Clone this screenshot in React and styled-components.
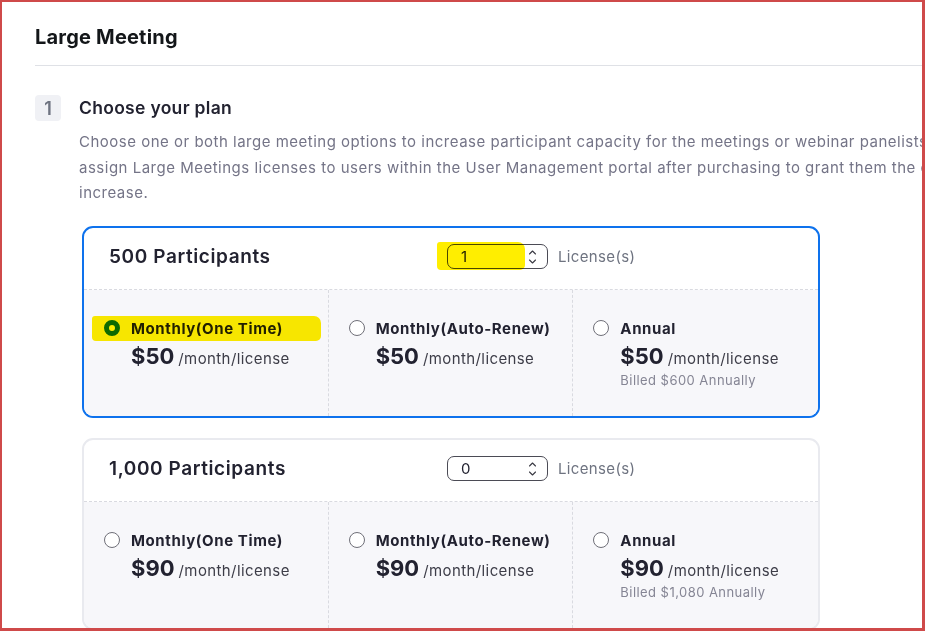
import React from "react";
import styled, { createGlobalStyle } from "styled-components";

const Global = createGlobalStyle`
  html, body { margin: 0; padding: 0; background: #fff; }
  body { font-family: Inter, "Noto Sans", "Liberation Sans", sans-serif; }
  * { box-sizing: border-box; }
`;

const Frame = styled.div`
  width: 925px;
  height: 631px;
  border-style: solid;
  border-color: #cf4a4a;
  border-width: 2px 3px 3px 2px;
  overflow: hidden;
  background: #fff;
  position: relative;
`;

const Page = styled.div`
  padding: 23px 0 0 33px;
  width: 1200px;
`;

const Header = styled.div`
  padding-bottom: 15px;
  border-bottom: 1px solid #dfe1e6;
`;

const Title = styled.h1`
  margin: 0;
  font-size: 20px;
  line-height: 25px;
  font-weight: 650;
  color: #131619;
  letter-spacing: 0.2px;
`;

const Step = styled.div`
  display: grid;
  grid-template-columns: 26px 1fr;
  column-gap: 18px;
  margin-top: 29px;
`;

const Badge = styled.div`
  width: 26px;
  height: 26px;
  border-radius: 4px;
  background: #f0f1f5;
  color: #6e7380;
  font-size: 18px;
  font-weight: 600;
  display: flex;
  align-items: center;
  justify-content: center;
`;

const StepTitle = styled.h2`
  margin: 0;
  font-size: 17.5px;
  font-weight: 600;
  line-height: 26px;
  color: #222230;
  letter-spacing: 0.3px;
`;

const Desc = styled.p`
  grid-column: 2;
  margin: 8px 0 0;
  font-size: 15px;
  line-height: 25.5px;
  color: #747487;
  letter-spacing: 0.5px;
  white-space: nowrap;
`;

const Cards = styled.div`
  grid-column: 2;
  display: flex;
  flex-direction: column;
  gap: 20px;
  margin: 20px 0 0 3px;
  width: 738px;
`;

const Card = styled.div`
  border: 2px solid ${(p) => (p.$active ? "#0e72ed" : "#e9eaef")};
  border-radius: 11px;
  overflow: hidden;
  background: #fff;
`;

const CardHead = styled.div`
  height: 62px;
  display: flex;
  align-items: center;
  padding-left: 25px;
  padding-bottom: 3px;
  border-bottom: 1px dashed #d9dae0;
`;

const CardTitle = styled.div`
  width: 338px;
  font-size: 19px;
  font-weight: 600;
  color: #222230;
  letter-spacing: 0.6px;
`;

const SpinWrap = styled.div`
  position: relative;
  display: flex;
  align-items: center;
`;

const Spin = styled.div`
  width: 101px;
  height: 25px;
  border: 1px solid #4b4b55;
  border-radius: 7px;
  display: flex;
  align-items: center;
  justify-content: space-between;
  padding: 0 10px 0 13px;
  font-size: 15px;
  color: #222230;
`;

const Lic = styled.span`
  margin-left: 10px;
  font-size: 15px;
  color: #6e7380;
  letter-spacing: 0.35px;
`;

const Marker = styled.div`
  position: absolute;
  background: #ffee00;
  mix-blend-mode: multiply;
  border-radius: 3px 7px 5px 4px;
  pointer-events: none;
`;

const Body = styled.div`
  display: grid;
  grid-template-columns: repeat(3, 1fr);
  background: #f7f7fa;
  height: 126px;
`;

const Col = styled.div`
  position: relative;
  padding: 28.5px 0 0 20px;
  border-right: ${(p) => (p.$last ? "none" : "1px dashed #d9dae0")};
`;

const OptRow = styled.div`
  display: flex;
  align-items: center;
  gap: 11px;
  height: 20px;
`;

const Radio = styled.span`
  width: 16px;
  height: 16px;
  border-radius: 50%;
  background: #fff;
  border: ${(p) => (p.$on ? "5px solid #0e72ed" : "1px solid #6f6f78")};
  flex: none;
`;

const OptLabel = styled.span`
  font-size: 15px;
  font-weight: 650;
  color: #222230;
  letter-spacing: 0.6px;
`;

const Price = styled.div`
  margin: 4px 0 0 27px;
  display: flex;
  align-items: baseline;
  gap: 4px;
  line-height: 28px;
`;

const Amount = styled.span`
  font-size: 22px;
  font-weight: 700;
  color: #222230;
`;

const Per = styled.span`
  font-size: 15px;
  color: #3d3d48;
  letter-spacing: 0.4px;
`;

const Billed = styled.div`
  margin: -1px 0 0 27px;
  font-size: 13px;
  line-height: 17px;
  color: #858594;
  letter-spacing: 0.45px;
`;

const Chevrons = () => (
  <svg width="9" height="18" viewBox="0 0 9 18" fill="none" stroke="#3a3a44" strokeWidth="1.1" strokeLinecap="round" strokeLinejoin="round">
    <path d="M1.5 6 L4.5 3 L7.5 6" />
    <path d="M1.5 12 L4.5 15 L7.5 12" />
  </svg>
);

const plans = [
  {
    title: "500 Participants",
    value: "1",
    active: true,
    prices: ["$50", "$50", "$50"],
    billed: "Billed $600 Annually",
  },
  {
    title: "1,000 Participants",
    value: "0",
    active: false,
    prices: ["$90", "$90", "$90"],
    billed: "Billed $1,080 Annually",
  },
];

const optionNames = ["Monthly(One Time)", "Monthly(Auto-Renew)", "Annual"];

export default function App() {
  return (
    <>
      <Global />
      <Frame>
        <Page>
          <Header>
            <Title>Large Meeting</Title>
          </Header>
          <Step>
            <Badge>1</Badge>
            <StepTitle>Choose your plan</StepTitle>
            <Desc>
              Choose one or both large meeting options to increase participant capacity for the meetings or webinar panelists. You can
              <br />
              assign Large Meetings licenses to users within the User Management portal after purchasing to grant them the capacity
              <br />
              increase.
            </Desc>
            <Cards>
              {plans.map((p) => (
                <Card key={p.title} $active={p.active}>
                  <CardHead>
                    <CardTitle>{p.title}</CardTitle>
                    <SpinWrap>
                      <Spin>
                        <span>{p.value}</span>
                        <Chevrons />
                      </Spin>
                      <Lic>License(s)</Lic>
                      {p.active && <Marker style={{ left: -10, top: -2, width: 88, height: 28 }} />}
                    </SpinWrap>
                  </CardHead>
                  <Body>
                    {optionNames.map((name, i) => (
                      <Col key={name} $last={i === 2}>
                        <OptRow>
                          <Radio $on={p.active && i === 0} />
                          <OptLabel>{name}</OptLabel>
                        </OptRow>
                        <Price>
                          <Amount>{p.prices[i]}</Amount>
                          <Per>/month/license</Per>
                        </Price>
                        {i === 2 && <Billed>{p.billed}</Billed>}
                        {p.active && i === 0 && (
                          <Marker style={{ left: 8, top: 26, width: 229, height: 25 }} />
                        )}
                      </Col>
                    ))}
                  </Body>
                </Card>
              ))}
            </Cards>
          </Step>
        </Page>
      </Frame>
    </>
  );
}
